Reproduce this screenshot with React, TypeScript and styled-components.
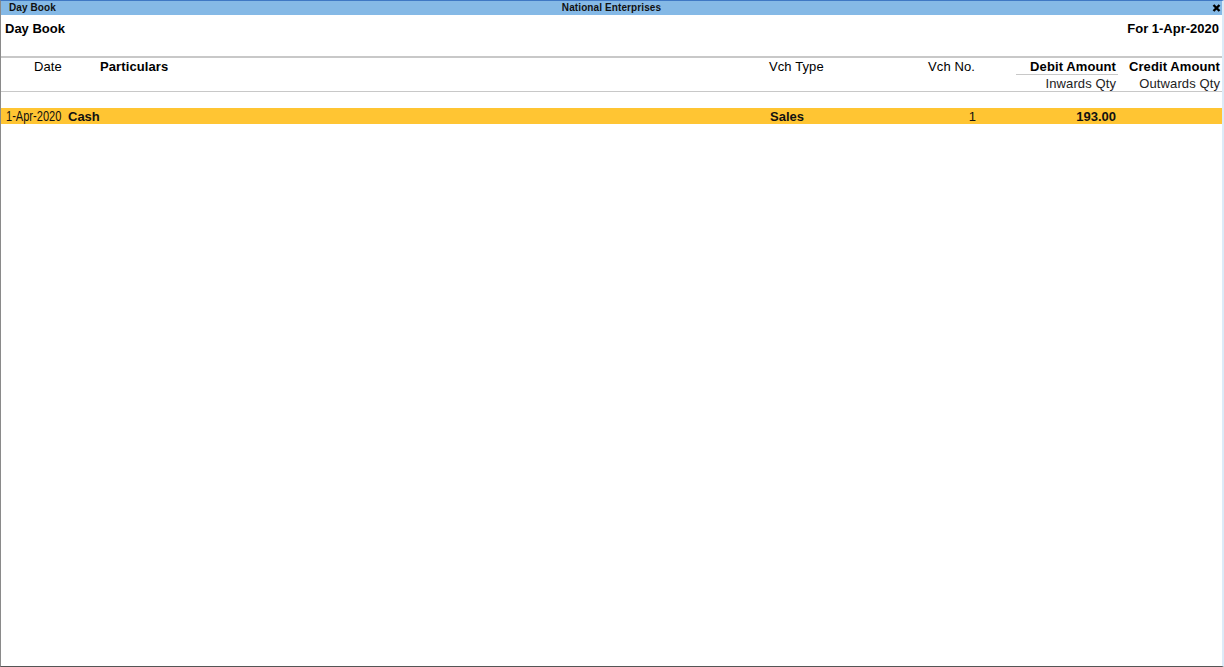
import React from "react";
import styled, { createGlobalStyle } from "styled-components";

const Global = createGlobalStyle`
  html, body { margin: 0; padding: 0; background: #fff; }
  body { font-family: "Liberation Sans", Arial, sans-serif; color: #000; }
`;

const Frame = styled.div`
  box-sizing: border-box;
  width: 1224px;
  height: 667px;
  display: flex;
  flex-direction: column;
  overflow: hidden;
  background: #fff;
  border-left: 1px solid #8a8a8a;
  border-right: 2px solid #dcebf8;
  border-bottom: 1px solid #555;
  border-top: 1px solid #3f78c4;
`;

const TitleBar = styled.div`
  height: 14px;
  margin-right: -2px;
  background: #85b9e6;
  display: grid;
  grid-template-columns: 1fr auto 1fr;
  align-items: center;
  font-size: 10px;
  font-weight: bold;
  letter-spacing: 0.1px;
  line-height: 14px;
  color: #111;
`;

const TitleLeft = styled.span`
  padding-left: 8px;
`;

const TitleCenter = styled.span`
  position: relative;
  left: -1px;
`;

const CloseBox = styled.span`
  justify-self: end;
  display: flex;
  padding-right: 3px;
`;

const ReportHead = styled.div`
  height: 35px;
  display: flex;
  justify-content: space-between;
  padding: 6px 3px 0 4px;
  font-size: 13px;
  font-weight: bold;
  line-height: 16px;
  border-bottom: 2px solid #c8c8c8;
`;

const HeadRow = styled.div`
  box-sizing: border-box;
  display: grid;
  grid-template-columns: 99px 669px 1fr 102px 104px;
  height: 34px;
  border-bottom: 1px solid #c8c8c8;
  font-size: 13px;
  letter-spacing: 0.1px;
  line-height: 17px;
`;

const HeadCell = styled.div<{ $bold?: boolean; $pad?: string }>`
  font-weight: ${(p) => (p.$bold ? "bold" : "normal")};
  padding: ${(p) => p.$pad ?? "0"};
`;

const VchHeadRow = styled.div`
  display: flex;
  justify-content: space-between;
  padding-right: 41px;
`;

const AmountHead = styled.div`
  display: flex;
  flex-direction: column;
  text-align: right;
`;

const AmountTop = styled.div<{ $rule?: boolean }>`
  box-sizing: border-box;
  height: 17px;
  font-weight: bold;
  padding-right: 2px;
  ${(p) => (p.$rule ? "border-bottom: 1px solid #c8c8c8;" : "")}
`;

const AmountBottom = styled.div`
  padding-right: 2px;
  color: #222;
`;

const Spacer = styled.div`
  height: 16px;
`;

const DataRow = styled.div`
  display: grid;
  grid-template-columns: 67px 702px 1fr 101px 104px;
  height: 16px;
  background: #ffc533;
  font-size: 13px;
  font-weight: bold;
  line-height: 17px;
  color: #111;
`;

const DateCell = styled.div`
  font-weight: normal;
  padding-left: 5px;
  font-size: 14px;
  line-height: 16px;
  white-space: nowrap;
`;

const Condensed = styled.span`
  display: inline-block;
  transform: scaleX(0.79);
  transform-origin: left center;
`;

const VchDataRow = styled.div`
  display: flex;
  justify-content: space-between;
  padding-right: 41px;
`;

const VchNumber = styled.span`
  font-weight: normal;
`;

const Amount = styled.div`
  text-align: right;
  padding-right: 2px;
`;

export default function App() {
  return (
    <>
      <Global />
      <Frame>
        <TitleBar>
          <TitleLeft>Day Book</TitleLeft>
          <TitleCenter>National Enterprises</TitleCenter>
          <CloseBox>
            <svg width="9" height="8" viewBox="0 0 9 8">
              <path d="M1.5 1 L7.5 7 M7.5 1 L1.5 7" stroke="#000" strokeWidth="2.4" />
            </svg>
          </CloseBox>
        </TitleBar>
        <ReportHead>
          <span>Day Book</span>
          <span>For 1-Apr-2020</span>
        </ReportHead>
        <HeadRow>
          <HeadCell $pad="0 0 0 33px">Date</HeadCell>
          <HeadCell $bold>Particulars</HeadCell>
          <VchHeadRow>
            <span>Vch Type</span>
            <span>Vch No.</span>
          </VchHeadRow>
          <AmountHead>
            <AmountTop $rule>Debit Amount</AmountTop>
            <AmountBottom>Inwards Qty</AmountBottom>
          </AmountHead>
          <AmountHead>
            <AmountTop>Credit Amount</AmountTop>
            <AmountBottom>Outwards Qty</AmountBottom>
          </AmountHead>
        </HeadRow>
        <Spacer />
        <DataRow>
          <DateCell>
            <Condensed>1-Apr-2020</Condensed>
          </DateCell>
          <div>Cash</div>
          <VchDataRow>
            <span>Sales</span>
            <VchNumber>1</VchNumber>
          </VchDataRow>
          <Amount>193.00</Amount>
          <div />
        </DataRow>
      </Frame>
    </>
  );
}
